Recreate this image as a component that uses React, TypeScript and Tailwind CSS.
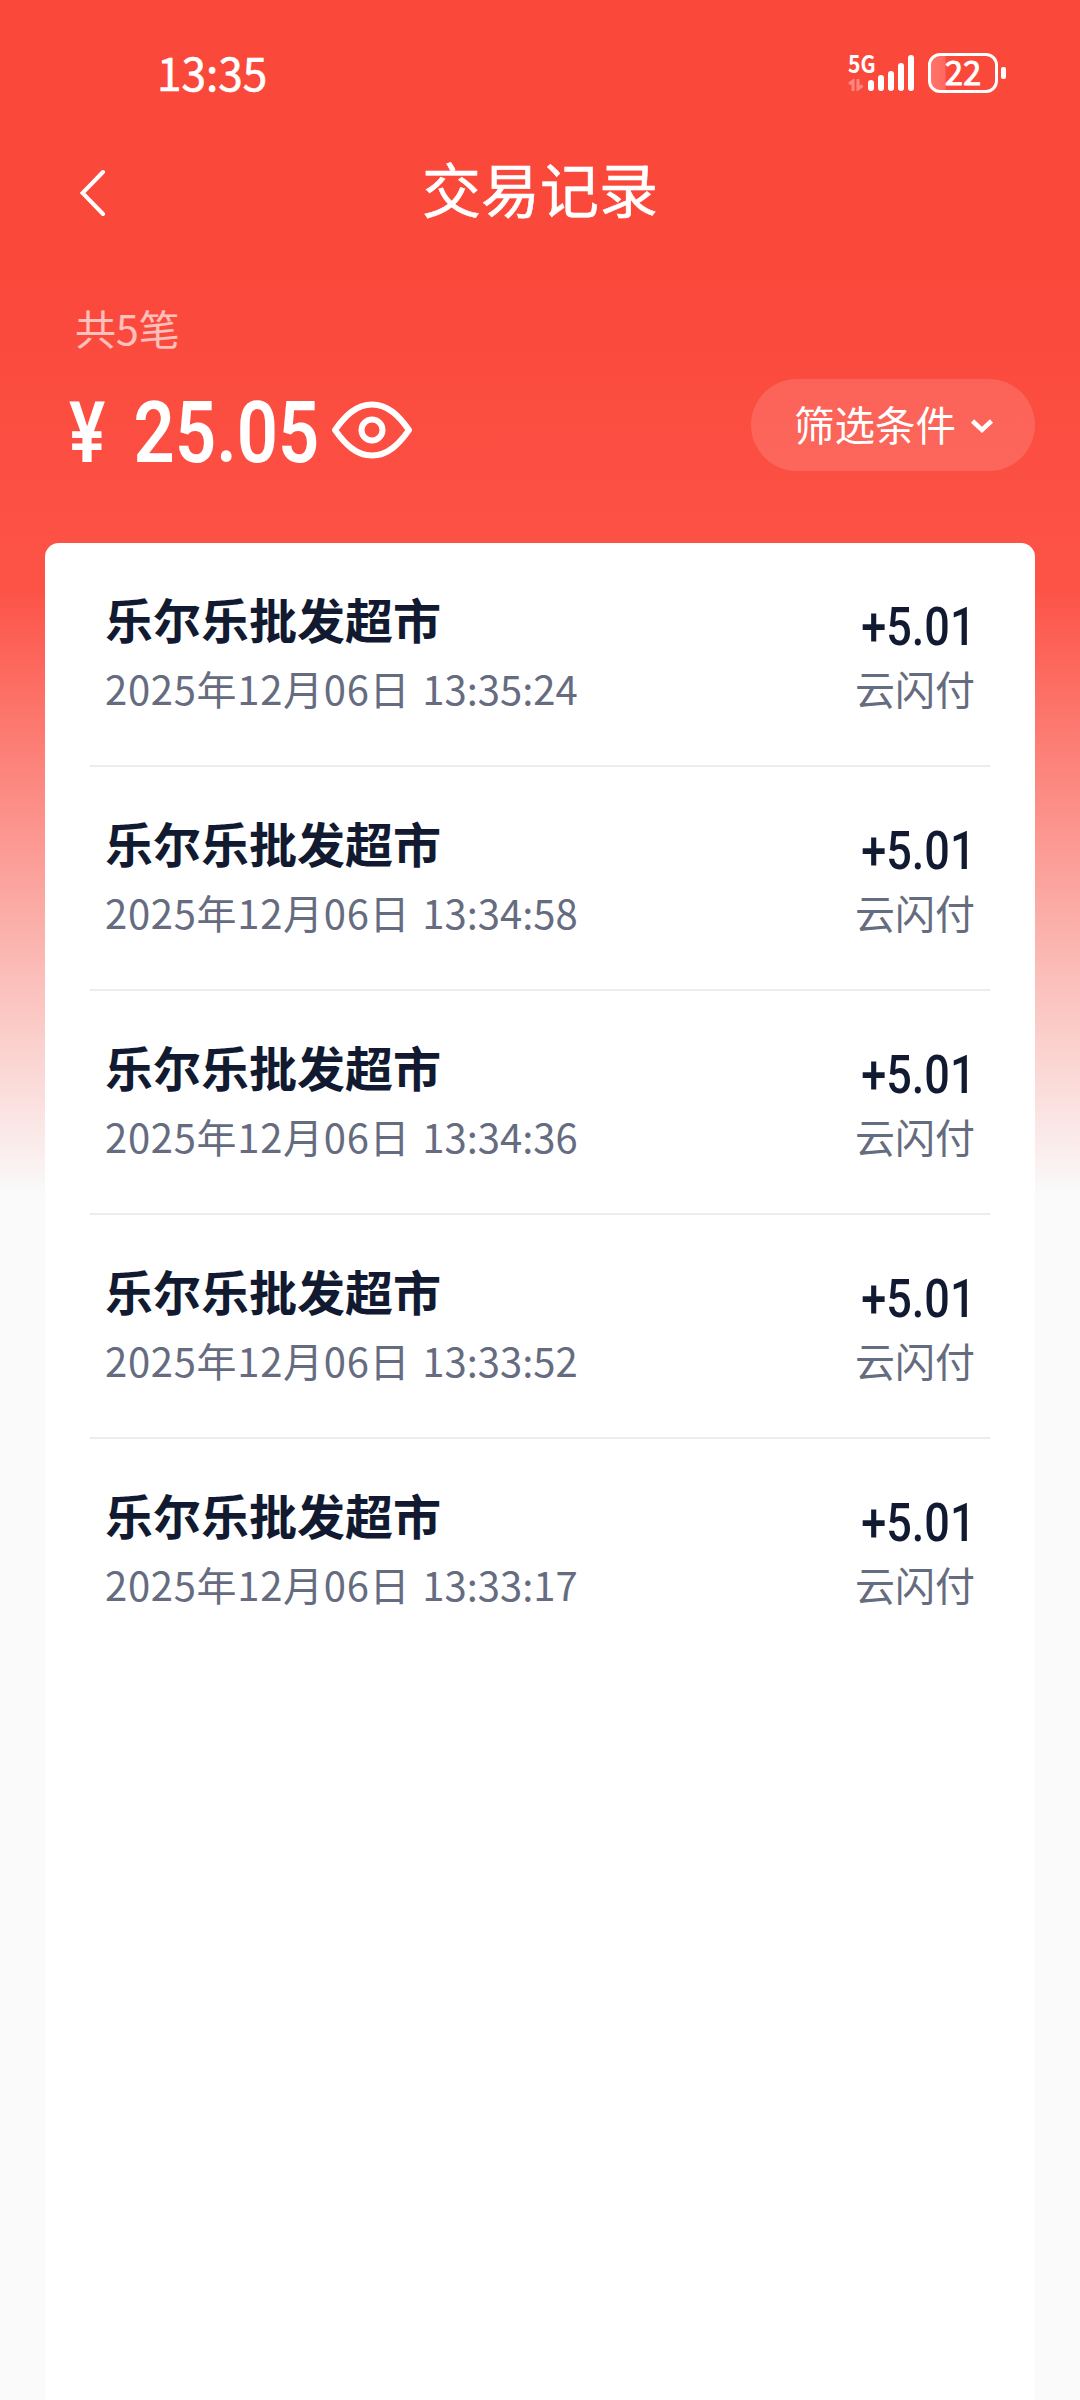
import React from 'react';

const transactions = [
  { date: '2025年12月06日', time: '13:35:24' },
  { date: '2025年12月06日', time: '13:34:58' },
  { date: '2025年12月06日', time: '13:34:36' },
  { date: '2025年12月06日', time: '13:33:52' },
  { date: '2025年12月06日', time: '13:33:17' },
].map((item) => ({ ...item, merchant: '乐尔乐批发超市', amount: '+5.01', channel: '云闪付' }));

const SignalIcon: React.FC = () => (
  <svg width="46" height="38" viewBox="0 0 46 38" fill="#fff">
    <rect x="0" y="26" width="6" height="11" rx="3" />
    <rect x="10" y="21" width="6" height="16" rx="3" />
    <rect x="20" y="17" width="6" height="20" rx="3" />
    <rect x="30" y="9" width="6" height="28" rx="3" />
    <rect x="40" y="1" width="6" height="36" rx="3" />
  </svg>
);

const DataArrows: React.FC = () => (
  <svg width="16" height="12" viewBox="0 0 16 12" fill="none" stroke="#fff" strokeWidth="3" opacity="0.35">
    <path d="M1 5L5 2V12" />
    <path d="M10 0V10L14.500 6.500" />
  </svg>
);

const EyeIcon: React.FC = () => (
  <svg width="82" height="60" viewBox="0 0 82 60" fill="none" stroke="#fff" strokeWidth="6" strokeLinejoin="round">
    <path d="M4 30C14 16 25 4.500 41 4.500S68 16 78 30C68 44 57 55.500 41 55.500S14 44 4 30Z" />
    <circle cx="41" cy="30" r="10.500" />
  </svg>
);

const StatusBar: React.FC = () => (
  <div className="flex h-[126px] items-start justify-between pl-[157px] pr-[74px]">
    <span className="mt-[48px] origin-left scale-x-[0.96] text-[46px] leading-[46px] [-webkit-text-stroke:0.6px]">13:35</span>
    <div className="mt-[53px] flex">
      <div className="flex w-5 flex-col">
        <span className="block h-[22px] origin-left scale-x-[0.88] text-[24px] font-bold leading-[20px]">5G</span>
        <div className="mt-[4px]">
          <DataArrows />
        </div>
      </div>
      <div className="mt-px">
        <SignalIcon />
      </div>
      <div className="ml-[14px] flex h-10 w-[70px] justify-center rounded-[12px] border-[3px] border-white bg-[linear-gradient(90deg,#ff7368_0,#ff6a60_14px,transparent_15px)] text-[33px] leading-[31px] [-webkit-text-stroke:0.8px]">
        22
      </div>
      <div className="ml-[3px] mt-[14px] h-3 w-[5px] rounded-[2px] bg-white" />
    </div>
  </div>
);

const App: React.FC = () => {
  return (
    <div className="flex h-[2400px] w-[1080px] flex-col overflow-hidden bg-[#fafafa] bg-[linear-gradient(180deg,#fa483b_0,#fa483b_270px,#fd5347_590px,#fafafa_1195px)] font-['Noto_Sans_CJK_SC',sans-serif] text-white">
      <StatusBar />

      <header className="grid h-[132px] grid-cols-[1fr_auto_1fr] items-center px-[80px]">
        <svg className="mt-px" width="26" height="48" viewBox="0 0 26 48" fill="none" stroke="#fff" strokeWidth="4" strokeLinecap="round">
          <path d="M23 3L2.500 24L23 45" />
        </svg>
        <h1 className="mb-[8px] text-[59px] leading-[70px] [-webkit-text-stroke:0.6px]">交易记录</h1>
      </header>

      <section className="flex h-[285px] items-start justify-between pl-[69px] pr-[45px]">
        <div>
          <p className="mt-[48px] pl-[6px] text-[41px] leading-[42px] text-white/65">共5笔</p>
          <div className="mt-[39px] flex items-center">
            <div className="flex h-[86px] w-[262px] items-center pt-[5px] font-[Roboto,sans-serif] text-[85px] font-semibold leading-[86px]">
              <span className="w-[63px]">
                <span className="inline-block origin-left scale-x-[0.8]">¥</span>
              </span>
              <span className="origin-left translate-x-[6px] scale-x-[0.85] [text-indent:16px]">25.05</span>
            </div>
            <EyeIcon />
          </div>
        </div>
        <button className="mt-[121px] flex h-[92px] w-[284px] items-center rounded-full bg-white/[0.13] pb-[2px] pl-[43px] text-[40.500px] leading-[60px]">
          筛选条件
          <svg className="ml-[14px] mt-[3px]" width="24" height="18" viewBox="0 0 24 18" fill="none" stroke="#fff" strokeWidth="4.500">
            <path d="M2.500 4L12 13L21.500 4" />
          </svg>
        </button>
      </section>

      <main className="mx-[45px] flex-1 rounded-t-[14px] bg-white px-[45px]">
        {transactions.map((item) => (
          <div
            key={item.time}
            className="flex h-[224px] justify-between border-b-2 border-[#ececee] px-[15px] last:border-b-0"
          >
            <div>
              <h2 className="mt-[46px] text-[48px] font-bold leading-[58px] text-[#111a30]">{item.merchant}</h2>
              <p className="mt-[16px] flex gap-[12px] text-[40px] leading-[50px] text-[#666c80]">
                <span className="tracking-[0.7px]">{item.date}</span>
                <span>{item.time}</span>
              </p>
            </div>
            <div className="flex flex-col items-end">
              <span className="mt-[54px] origin-right translate-x-px scale-x-[0.85] font-[Roboto,sans-serif] text-[53px] font-medium leading-[60px] text-[#111a30]">
                {item.amount}
              </span>
              <span className="mt-[6px] text-[40px] leading-[50px] text-[#666c80]">{item.channel}</span>
            </div>
          </div>
        ))}
      </main>
    </div>
  );
};

export default App;
